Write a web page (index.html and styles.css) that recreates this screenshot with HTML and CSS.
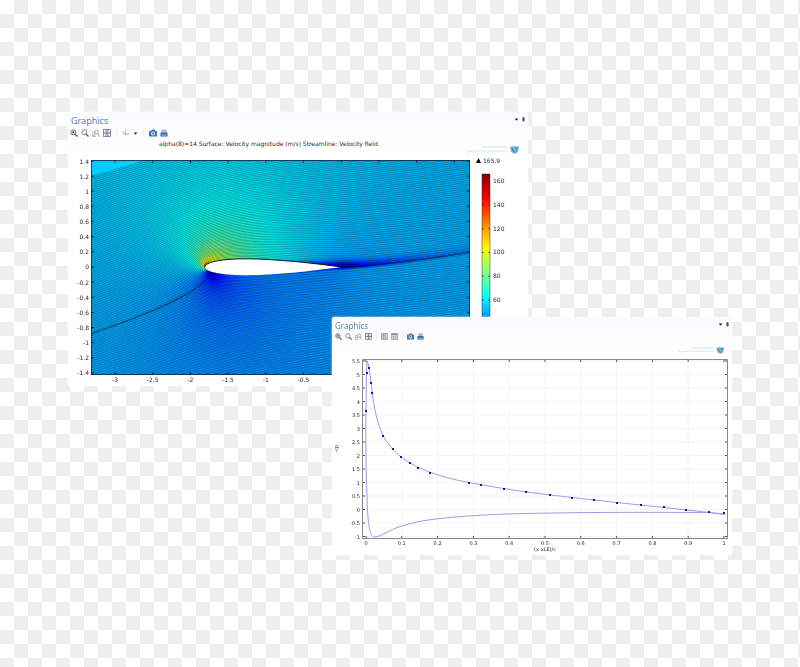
FILE: index.html
```html
<!DOCTYPE html>
<html lang="en">
<head>
<meta charset="utf-8">
<title>Graphics</title>
<link rel="stylesheet" href="styles.css">
</head>
<body>
<svg class="sprite" aria-hidden="true">
  <symbol id="zoom-in" viewBox="0 0 16 16"><circle cx="6.5" cy="6.5" r="5" fill="#eee" stroke="#777" stroke-width="2"/><path d="M10 10l5 5" stroke="#666" stroke-width="3"/><path d="M4 6.5h5M6.5 4v5" stroke="#444" stroke-width="1.6"/></symbol>
  <symbol id="zoom-out" viewBox="0 0 16 16"><circle cx="6.5" cy="6.5" r="5" fill="#f4f4f4" stroke="#888" stroke-width="2"/><path d="M10 10l5 5" stroke="#666" stroke-width="3"/></symbol>
  <symbol id="zoom-box" viewBox="0 0 16 16"><path d="M1 15V6h5M1 15h7" fill="none" stroke="#aaa" stroke-width="1.5"/><circle cx="9" cy="6" r="4" fill="#f4f4f4" stroke="#999" stroke-width="1.6"/><path d="M11 9l4 6M6 9l-3 5" stroke="#999" stroke-width="2"/></symbol>
  <symbol id="extents" viewBox="0 0 16 16"><rect x="1" y="1" width="14" height="14" fill="#e9eef5" stroke="#778" stroke-width="1.6"/><path d="M8 1v14M1 8h14" stroke="#678" stroke-width="2"/><path d="M4 4h1M11 4h1M4 12h1M11 12h1" stroke="#456" stroke-width="2"/></symbol>
  <symbol id="axes" viewBox="0 0 16 16"><path d="M7 1v8" stroke="#9ab" stroke-width="1.5"/><path d="M7 11l-6-5" stroke="#79b" stroke-width="1.6"/><path d="M7 11l8-2" stroke="#d99" stroke-width="2"/><circle cx="7" cy="11" r="1.5" fill="#999"/></symbol>
  <symbol id="caret" viewBox="0 0 16 16"><path d="M2 5h12l-6 7z" fill="#222"/></symbol>
  <symbol id="camera" viewBox="0 0 16 16"><path d="M0 4h4l2-3h5l2 3h3v11H0z" fill="#3e74b4"/><circle cx="8" cy="9" r="4" fill="#dbe9f7"/><circle cx="8" cy="9" r="2" fill="#3e74b4"/></symbol>
  <symbol id="print" viewBox="0 0 16 16"><path d="M3 1h10v6H3z" fill="#9db9da"/><path d="M1 7h14v8H1z" fill="#2c65ab"/><path d="M3 11h10v2H3z" fill="#bcd0e8"/></symbol>
  <symbol id="grid-a" viewBox="0 0 16 16"><path d="M1 1h14v14H1z" fill="#d9dde3" stroke="#888" stroke-width="1.4"/><path d="M5 1v14M10 1v14M1 5h9M1 10h9" stroke="#888" stroke-width="1.4"/></symbol>
  <symbol id="grid-b" viewBox="0 0 16 16"><path d="M1 1h14v14H1z" fill="#d5deec" stroke="#8391a8" stroke-width="1.4"/><path d="M1 3h14" stroke="#6884ad" stroke-width="3"/><path d="M1 8h14M1 12h14M6 3v12M11 3v12" stroke="#96a3b8"/></symbol>
  <symbol id="pin" viewBox="0 0 16 16"><path d="M5 1h6v8h2v2H3V9h2z" fill="#444"/><path d="M8 10v6" stroke="#444" stroke-width="2"/></symbol>
  <symbol id="brand" viewBox="0 0 56 10"><path d="M18 2h25" stroke="#e2eff4" stroke-width="2"/><path d="M1 5l3 2 3-1h36" fill="none" stroke="#e6edef" stroke-width="1.5"/><path d="M46 2l4-1 5 1-1 5-3 2-4-2z" fill="#7ab4d3"/><path d="M48 3l1 3 2 1M51 3l3 0M52 5l1 1" fill="none" stroke="#2f7fae"/><path d="M46 2l4-1 5 1" fill="none" stroke="#a3d3e6"/></symbol>
</svg>

<main class="desktop">
  <section class="window window-field">
    <header class="head">
      <h2 class="title">Graphics</h2>
      <div class="controls">
        <button aria-label="Window menu"><svg><use href="#caret"/></svg></button>
        <button aria-label="Pin"><svg><use href="#pin"/></svg></button>
      </div>
    </header>
    <div class="toolbar">
      <button aria-label="Zoom in"><svg><use href="#zoom-in"/></svg></button>
      <button aria-label="Zoom out"><svg><use href="#zoom-out"/></svg></button>
      <button aria-label="Zoom box"><svg><use href="#zoom-box"/></svg></button>
      <button aria-label="Zoom extents"><svg><use href="#extents"/></svg></button>
      <span class="divider"></span>
      <button aria-label="View"><svg><use href="#axes"/></svg></button>
      <button class="narrow" aria-label="View options"><svg><use href="#caret"/></svg></button>
      <span class="divider"></span>
      <button aria-label="Snapshot"><svg><use href="#camera"/></svg></button>
      <button aria-label="Print"><svg><use href="#print"/></svg></button>
    </div>
    <svg class="chart" viewBox="68 139 460 247" role="img" aria-label="Velocity field around an airfoil">
      <defs>
        <linearGradient id="jet" gradientUnits="userSpaceOnUse" x1="0" y1="371" x2="0" y2="174">
          <stop offset="0" stop-color="#000080"/><stop offset=".125" stop-color="#00f"/><stop offset=".375" stop-color="#0ff"/><stop offset=".625" stop-color="#ff0"/><stop offset=".875" stop-color="#f00"/><stop offset="1" stop-color="#800000"/>
        </linearGradient>
      </defs>
      <text class="label" x="159" y="146">alpha(8)=14 Surface: Velocity magnitude (m/s) Streamline: Velocity field</text>
      <use href="#brand" x="464" y="145" width="56" height="10"/>
      <foreignObject x="91" y="160" width="379" height="215"><canvas id="field" class="field" width="379" height="215"></canvas></foreignObject>
      <path id="foil" fill="#fff"/>
      <path id="foil-edge" fill="none" stroke="#012" stroke-width="1"/>
      <rect x="91.500" y="160.500" width="378" height="214" fill="none" stroke="#123" stroke-opacity=".8"/>
      <g id="field-ticks" class="label"></g>
      <path d="M476 163l2.500-5 2.500 5z"/>
      <text class="label" x="483" y="163">165.9</text>
      <rect x="482" y="174" width="8" height="197" fill="url(#jet)" stroke="#333" stroke-width=".5"/>
      <g id="bar-ticks" class="label"></g>
    </svg>
  </section>

  <section class="window window-pressure">
    <header class="head">
      <h2 class="title">Graphics</h2>
      <div class="controls">
        <button aria-label="Window menu"><svg><use href="#caret"/></svg></button>
        <button aria-label="Pin"><svg><use href="#pin"/></svg></button>
      </div>
    </header>
    <div class="toolbar">
      <button aria-label="Zoom in"><svg><use href="#zoom-in"/></svg></button>
      <button aria-label="Zoom out"><svg><use href="#zoom-out"/></svg></button>
      <button aria-label="Zoom box"><svg><use href="#zoom-box"/></svg></button>
      <button aria-label="Zoom extents"><svg><use href="#extents"/></svg></button>
      <span class="divider"></span>
      <button aria-label="Log scale"><svg><use href="#grid-a"/></svg></button>
      <button aria-label="Table"><svg><use href="#grid-b"/></svg></button>
      <span class="divider"></span>
      <button aria-label="Snapshot"><svg><use href="#camera"/></svg></button>
      <button aria-label="Print"><svg><use href="#print"/></svg></button>
    </div>
    <svg class="chart" viewBox="332 341 400 214" role="img" aria-label="Pressure coefficient along the chord">
      <use href="#brand" x="677" y="346" width="48" height="9"/>
      <g id="cp-grid" stroke="#f3f3f8"></g>
      <path d="M366 411L366.500 376 367 361C370 366 371 386 373 399S378 425 383 435.500C388 445 395 452 401 457S417 467 429.500 472C443 477 455 480 469 482.500C493 487 524 492 550.500 495S624 503.500 664 507.500L709.500 512.500 724 514" class="curve"/>
      <path d="M366 411C365.500 440 366 470 367 495C367.500 525 370 537 374.500 537C381 537 388 530 402 526C415 521.500 430 519.500 445 518C470 515.500 500 514 530 513.400C590 512 650 512.300 709 512.500L724 514.500" class="curve"/>
      <g id="cp-points" fill="#1d0bc0"></g>
      <path d="M362.500 538.500V359.500H727.500V538.500z" fill="none" stroke="#888"/>
      <g id="cp-ticks" class="label-small"></g>
      <text class="label-small" x="545" y="551" text-anchor="middle">(x-xLE)/c</text>
      <text class="label-small" transform="translate(338 449) rotate(-90)" text-anchor="middle">-cp</text>
    </svg>
  </section>
</main>
<script src="charts.js"></script>
</body>
</html>
```
FILE: styles.css
```css
* { box-sizing: border-box; }

body {
  margin: 0;
  font-family: "Open Sans", "Noto Sans", sans-serif;
  background: #fff conic-gradient(#eee 25%, #fff 0 50%, #eee 0 75%, #fff 0) 0 0 / 28px 28px;
}

.sprite { display: none; }

.desktop {
  position: relative;
  min-height: 100vh;
}

.window {
  position: absolute;
  display: flex;
  flex-direction: column;
  background: linear-gradient(#fbfbfe, #fff 40px);
  border-radius: 2px;
  box-shadow: 0 0 2px #fff;
}

.window-field {
  left: 8.5%;
  top: 112px;
  width: 57.5%;
}

.window-pressure {
  left: 41.5%;
  top: 317px;
  width: 50%;
}

.head {
  display: flex;
  justify-content: space-between;
  padding: 3px 2px 0 3px;
}

.title {
  margin: 0;
  font-family: "Noto Sans", sans-serif;
  font-size: 9px;
  font-weight: 400;
  line-height: 12px;
  color: #6283b4;
}

.window-pressure .title {
  font-size: 8px;
  line-height: 11px;
}

.controls {
  display: flex;
  gap: 2px;
  padding-top: 2px;
}

.toolbar {
  display: flex;
  align-items: center;
  gap: 3px;
  height: 12px;
  padding: 0 2px;
}

.window-pressure .toolbar {
  height: 10px;
  padding: 0 3px;
}

button {
  display: block;
  width: 8px;
  height: 8px;
  padding: 0;
  border: 0;
  background: none;
}

.controls button,
.toolbar .narrow {
  width: 5px;
  height: 5px;
}

.window-pressure .toolbar button {
  width: 7px;
  height: 7px;
}

button svg {
  display: block;
  width: 100%;
  height: 100%;
}

.divider {
  width: 1px;
  height: 8px;
  margin: 0 2px;
  background: #eceef2;
}

.window-pressure .divider { margin: 0 1px; }

.window-pressure .toolbar { gap: 3px; }

.chart {
  display: block;
  width: 100%;
}

.field { display: block; }

.label,
.label-small {
  font-family: "DejaVu Sans", sans-serif;
  font-size: 6px;
  fill: #2a2a2a;
}

.label-small { font-size: 5px; }

.curve {
  fill: none;
  stroke: #a09ae6;
  stroke-width: 1;
}
```
FILE: charts.js
```js
const NS = "http://www.w3.org/2000/svg";

function add(id, tag, attrs, text) {
  const el = document.createElementNS(NS, tag);
  for (const k in attrs) el.setAttribute(k, attrs[k]);
  if (text !== undefined) el.textContent = text;
  document.getElementById(id).appendChild(el);
}

function line(id, x1, y1, x2, y2, stroke) {
  const a = { x1, y1, x2, y2 };
  if (stroke) a.stroke = stroke;
  add(id, "line", a);
}

const num = v => String(Math.round(v * 10) / 10);

/* Velocity chart axes */
for (let i = 0; i <= 14; i++) {
  const v = 1.4 - i * 0.2, y = 161 + i * 15.14;
  add("field-ticks", "text", { x: 89, y: y + 2.5, "text-anchor": "end" }, num(v));
  line("field-ticks", 91, y, 94, y, "#123");
  line("field-ticks", 467, y, 470, y, "#123");
}
for (let i = 0; i <= 9; i++) {
  const x = 115 + i * 37.7;
  line("field-ticks", x, 160, x, 163, "#123");
  line("field-ticks", x, 372, x, 375, "#123");
  if (i < 6) add("field-ticks", "text", { x, y: 382, "text-anchor": "middle" }, num(-3 + i * 0.5));
}
for (let v = 160; v >= 60; v -= 20) {
  const y = 181 + (160 - v) * 1.19;
  add("bar-ticks", "text", { x: 493, y: y + 2 }, v);
  line("bar-ticks", 482, y, 483.5, y, "#333");
  line("bar-ticks", 488.5, y, 490, y, "#333");
}

/* Airfoil outline, NACA 0012 */
const LE = 205, CHORD = 136, MID = 267;
function side(sign) {
  const pts = [];
  for (let i = 0; i <= 60; i++) {
    const t = (i / 60) ** 2;
    const h = 0.6 * (0.2969 * Math.sqrt(t) - 0.126 * t - 0.3516 * t * t + 0.2843 * t ** 3 - 0.1036 * t ** 4);
    pts.push((LE + t * CHORD).toFixed(2) + " " + (MID - sign * h * CHORD).toFixed(2));
  }
  return pts;
}
const upper = side(1), lower = side(-1);
document.getElementById("foil").setAttribute("d", "M" + upper.join("L") + "L" + lower.reverse().join("L") + "z");
document.getElementById("foil-edge").setAttribute("d", "M" + upper.join("L"));

/* Lifting flow around a Joukowski section, coloured by speed with streamlines */
const cv = document.getElementById("field"), ctx = cv.getContext("2d");
const img = ctx.createImageData(cv.width, cv.height);
const U = 50, A = 13 * Math.PI / 180, E = 0.095, C = CHORD / 4.03, R = C * (1 + E);
const G = 2 * U * R * Math.sin(A), PSI0 = G * Math.log(R);
const ca = Math.cos(A), sa = Math.sin(A);
const clamp = v => Math.max(0, Math.min(1, v));

function flow(px, py) {
  const zx = px - 341 + 2 * C, zy = MID - py;
  const ax = zx * zx - zy * zy - 4 * C * C, ay = 2 * zx * zy;
  const m = Math.hypot(ax, ay);
  let sx = Math.sqrt((m + ax) / 2), sy = Math.sqrt(Math.max(0, (m - ax) / 2)) * (ay < 0 ? -1 : 1);
  let qx = (zx + sx) / 2, qy = (zy + sy) / 2;
  const rx = (zx - sx) / 2, ry = (zy - sy) / 2;
  if (Math.hypot(rx + E * C, ry) > Math.hypot(qx + E * C, qy)) { qx = rx; qy = ry; }
  const x = qx + E * C, y = qy, r2 = x * x + y * y;
  const psi = U * (y * ca - x * sa + R * R * (x * sa - y * ca) / r2) + G * Math.log(r2) / 2;
  const ix = x / r2, iy = -y / r2, i2x = ix * ix - iy * iy, i2y = 2 * ix * iy;
  const wx = U * (ca - R * R * (ca * i2x - sa * i2y)) - G * iy;
  const wy = U * (-sa - R * R * (ca * i2y + sa * i2x)) + G * ix;
  const k2 = qx * qx + qy * qy;
  const jx = 1 - C * C * (qx * qx - qy * qy) / (k2 * k2), jy = C * C * 2 * qx * qy / (k2 * k2);
  return [psi - PSI0, Math.hypot(wx, wy) / Math.max(0.02, Math.hypot(jx, jy))];
}

const top0 = flow(92, 176)[0];
for (let j = 0; j < cv.height; j++) {
  for (let i = 0; i < cv.width; i++) {
    const px = 91.5 + i, py = 160.5 + j;
    const [psi, speed] = flow(px, py);
    const d = psi / Math.max(speed, 8);
    let v = speed;
    if (px > 270) {
      const grow = clamp((px - 270) / 70), fade = px < 341 ? 1 : Math.exp(-(px - 341) / 70);
      const w = d > 0 ? 1 + 5 * grow : 2;
      v *= 1 - 0.75 * grow * fade * Math.exp(-d * d / (w * w));
    }
    const t = Math.min(0.78, v / 166);
    const step = U * 2.1, f = psi / step, near = Math.abs(f - Math.round(f)) * step / Math.max(speed, 8);
    let shade = psi > top0 ? 0 : 0.06 + clamp(1 - near) * 0.25;
    if (Math.abs(d) < 1 && (px < 206 || px > 340)) shade = Math.max(shade, 0.6 * (1 - Math.abs(d) * 0.5));
    const o = (j * cv.width + i) * 4, k = 255 * (1 - shade);
    img.data[o] = k * clamp(1.5 - Math.abs(4 * t - 3));
    img.data[o + 1] = k * clamp(1.5 - Math.abs(4 * t - 2));
    img.data[o + 2] = k * clamp(1.5 - Math.abs(4 * t - 1));
    img.data[o + 3] = 255;
  }
}
ctx.putImageData(img, 0, 0);

/* Pressure chart */
for (let i = 0; i <= 10; i++) {
  const x = 366 + i * 35.8;
  line("cp-grid", x, 360, x, 538);
  line("cp-ticks", x, 360, x, 362, "#555");
  line("cp-ticks", x, 536, x, 538, "#555");
  add("cp-ticks", "text", { x, y: 545, "text-anchor": "middle" }, num(i / 10));
}
for (let i = 0; i <= 13; i++) {
  const y = 361 + i * 13.5;
  line("cp-grid", 363, y, 727, y);
  line("cp-ticks", 363, y, 365, y, "#555");
  line("cp-ticks", 725, y, 727, y, "#555");
  add("cp-ticks", "text", { x: 360, y: y + 2, "text-anchor": "end" }, num(5.5 - i / 2));
}
[[366, 411], [367, 373], [369, 368], [371, 383], [372, 393], [383, 436], [393, 449], [401, 457],
 [410, 463], [418, 468], [430, 473], [469, 483], [481, 485], [504, 489], [526, 492], [550, 495],
 [572, 498], [594, 500], [617, 503], [641, 505], [664, 507], [686, 510], [709, 512], [724, 513]]
  .forEach(([x, y]) => add("cp-points", "rect", { x: x - 1, y: y - 1, width: 2, height: 2 }));
```
